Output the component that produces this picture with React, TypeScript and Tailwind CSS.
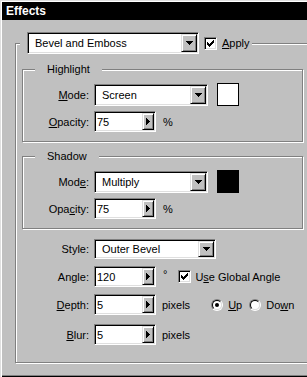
import React from 'react';

// win9x bevels
const sunken =
  'border border-t-[#808080] border-l-[#808080] border-r-white border-b-white shadow-[inset_1px_1px_0_#000,inset_-1px_-1px_0_#dfdfdf]';
const raised =
  'border border-t-[#dfdfdf] border-l-[#dfdfdf] border-r-black border-b-black shadow-[inset_1px_1px_0_#fff,inset_-1px_-1px_0_#808080] bg-[#c0c0c0]';
const etched = 'border border-[#808080] shadow-[inset_1px_1px_0_#fff,1px_1px_0_#fff]';

const DownArrow = () => (
  <svg width="7" height="4" shapeRendering="crispEdges">
    <rect x="0" y="0" width="7" height="1" />
    <rect x="1" y="1" width="5" height="1" />
    <rect x="2" y="2" width="3" height="1" />
    <rect x="3" y="3" width="1" height="1" />
  </svg>
);

const RightArrow = () => (
  <svg width="4" height="7" shapeRendering="crispEdges">
    <rect x="0" y="0" width="1" height="7" />
    <rect x="1" y="1" width="1" height="5" />
    <rect x="2" y="2" width="1" height="3" />
    <rect x="3" y="3" width="1" height="1" />
  </svg>
);

const Combo = ({ value, className }: { value: string; className: string }) => (
  <div className={`${sunken} ${className} flex items-center bg-white p-[1px]`}>
    <span className="flex-1 pl-[6px] whitespace-nowrap overflow-hidden">{value}</span>
    <div className={`${raised} w-[16px] h-full flex items-center justify-center`}>
      <DownArrow />
    </div>
  </div>
);

const Spin = ({ value }: { value: string }) => (
  <div className={`${sunken} w-[62px] h-[21px] flex items-center bg-white p-[1px]`}>
    <span className="flex-1 pl-[1px]">{value}</span>
    <div className={`${raised} w-[12px] h-full flex items-center justify-center`}>
      <RightArrow />
    </div>
  </div>
);

const Check = () => (
  <div className={`${sunken} w-[13px] h-[13px] bg-white flex items-center justify-center`}>
    <svg width="7" height="7" shapeRendering="crispEdges">
      <rect x="0" y="2" width="1" height="3" />
      <rect x="1" y="3" width="1" height="3" />
      <rect x="2" y="4" width="1" height="3" />
      <rect x="3" y="3" width="1" height="3" />
      <rect x="4" y="2" width="1" height="3" />
      <rect x="5" y="1" width="1" height="3" />
      <rect x="6" y="0" width="1" height="3" />
    </svg>
  </div>
);

const Radio = ({ on }: { on?: boolean }) => (
  <div className="w-[12px] h-[12px] rounded-full border border-t-[#808080] border-l-[#808080] border-r-white border-b-white">
    <div className="w-full h-full rounded-full border border-t-black border-l-black border-r-[#dfdfdf] border-b-[#dfdfdf] bg-white flex items-center justify-center">
      {on && <div className="w-[4px] h-[4px] rounded-full bg-black" />}
    </div>
  </div>
);

const Label = ({ children }: { children: React.ReactNode }) => (
  <span className="w-[66px] mr-[5px] text-right whitespace-nowrap">{children}</span>
);

const BlendGroup = ({
  title,
  mode,
  swatch,
  modeLabel,
  opacityLabel,
  className,
}: {
  title: string;
  mode: string;
  swatch: string;
  modeLabel: React.ReactNode;
  opacityLabel: React.ReactNode;
  className: string;
}) => (
  <fieldset className={`${etched} ${className} w-[281px] pt-[7px] pb-[9px]`}>
    <legend className="ml-[12px] px-[12px] leading-[14px] bg-[#c0c0c0]">{title}</legend>
    <div className="flex items-center">
      <Label>{modeLabel}</Label>
      <Combo value={mode} className="w-[114px] h-[22px]" />
      <div className={`${swatch} ml-[9px] w-[22px] h-[23px] border border-black`} />
    </div>
    <div className="flex items-center mt-[5px]">
      <Label>{opacityLabel}</Label>
      <Spin value="75" />
      <span className="ml-[7px]">%</span>
    </div>
  </fieldset>
);

export default function App() {
  return (
    <div className="w-[307px] h-[377px] overflow-hidden bg-[#c0c0c0] pl-[2px] pt-[2px] text-[11px] leading-[14px] text-black font-['Liberation_Sans',Arial,sans-serif] shadow-[inset_1px_1px_0_#dfdfdf,inset_2px_2px_0_#fff,inset_0_-1px_0_#000,inset_0_-2px_0_#808080]">
      <div className="h-[18px] bg-black text-white font-bold text-[12px] pl-[4px] flex items-center">
        Effects
      </div>

      <fieldset className={`${etched} ml-[13px] mt-[12px] w-[300px] pb-[17px]`}>
        <legend className="ml-[4px] pl-[7px] pr-[2px] bg-[#c0c0c0]">
          <div className="flex items-center">
            <Combo value="Bevel and Emboss" className="w-[172px] h-[22px]" />
            <div className="ml-[5px]">
              <Check />
            </div>
            <span className="ml-[5px]">
              <u>A</u>pply
            </span>
          </div>
        </legend>

        <div className="pl-[6px]">
          <BlendGroup
            title="Highlight"
            mode="Screen"
            swatch="bg-white"
            className="mt-[8px]"
            modeLabel={
              <>
                <u>M</u>ode:
              </>
            }
            opacityLabel={
              <>
                <u>O</u>pacity:
              </>
            }
          />
          <BlendGroup
            title="Shadow"
            mode="Multiply"
            swatch="bg-black"
            className="mt-[7px]"
            modeLabel={
              <>
                Mod<u>e</u>:
              </>
            }
            opacityLabel={
              <>
                Opa<u>c</u>ity:
              </>
            }
          />

          <div className="flex items-center mt-[10px] pl-[1px]">
            <Label>Style:</Label>
            <Combo value="Outer Bevel" className="w-[122px] h-[20px]" />
          </div>

          <div className="flex items-center mt-[7px] pl-[1px]">
            <Label>Angle:</Label>
            <Spin value="120" />
            <span className="ml-[7px] self-start mt-[1px]">°</span>
            <div className="ml-[11px]">
              <Check />
            </div>
            <span className="ml-[4px]">
              U<u>s</u>e Global Angle
            </span>
          </div>

          <div className="flex items-center mt-[7px] pl-[1px]">
            <Label>
              <u>D</u>epth:
            </Label>
            <Spin value="5" />
            <span className="ml-[6px]">pixels</span>
            <div className="ml-[21px]">
              <Radio on />
            </div>
            <span className="ml-[5px]">
              <u>U</u>p
            </span>
            <div className="ml-[7px]">
              <Radio />
            </div>
            <span className="ml-[5px]">
              Do<u>w</u>n
            </span>
          </div>

          <div className="flex items-center mt-[9px] pl-[1px]">
            <Label>
              <u>B</u>lur:
            </Label>
            <Spin value="5" />
            <span className="ml-[6px]">pixels</span>
          </div>
        </div>
      </fieldset>
    </div>
  );
}
